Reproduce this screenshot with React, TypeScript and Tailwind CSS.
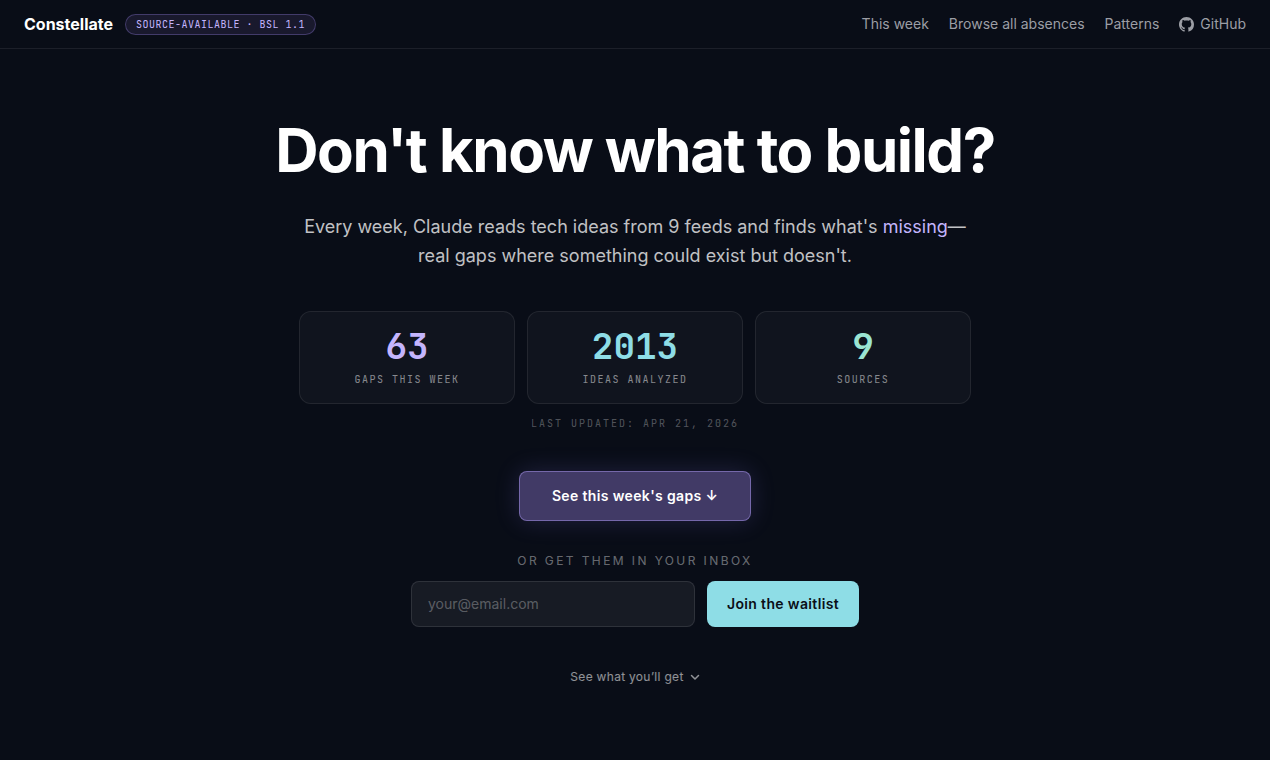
import React from "react";

const stats = [
  { value: "63", label: "Gaps this week", color: "text-[#c4b5fd]" },
  { value: "2013", label: "Ideas analyzed", color: "text-[#8edde6]" },
  { value: "9", label: "Sources", color: "text-[#9be5d3]" },
];

function GitHubIcon() {
  return (
    <svg viewBox="0 0 16 16" className="size-[15px]" fill="currentColor" aria-hidden="true">
      <path d="M8 0C3.58 0 0 3.58 0 8c0 3.54 2.29 6.53 5.47 7.59.4.07.55-.17.55-.38 0-.19-.01-.82-.01-1.49-2.01.37-2.53-.49-2.69-.94-.09-.23-.48-.94-.82-1.13-.28-.15-.68-.52-.01-.53.63-.01 1.08.58 1.23.82.72 1.21 1.87.87 2.33.66.07-.52.28-.87.51-1.07-1.78-.2-3.64-.89-3.64-3.95 0-.87.31-1.59.82-2.15-.08-.2-.36-1.02.08-2.12 0 0 .67-.21 2.2.82.64-.18 1.32-.27 2-.27s1.36.09 2 .27c1.53-1.04 2.2-.82 2.2-.82.44 1.1.16 1.92.08 2.12.51.56.82 1.27.82 2.15 0 3.07-1.87 3.75-3.65 3.95.29.25.54.73.54 1.48 0 1.07-.01 1.93-.01 2.2 0 .21.15.46.55.38A8.01 8.01 0 0 0 16 8c0-4.42-3.58-8-8-8z" />
    </svg>
  );
}

export default function App() {
  return (
    <div className="min-h-screen bg-[#090d17] font-['Inter',sans-serif] text-white">
      <header className="flex items-center justify-between border-b border-white/8 px-6 py-3">
        <div className="flex items-center gap-3">
          <a href="#" className="text-base leading-6 font-bold">Constellate</a>
          <span className="rounded-full border border-[#a78bfa]/30 bg-[#a78bfa]/10 px-2.5 py-0.5 font-['JetBrains_Mono','DejaVu_Sans_Mono',monospace] text-[10px] leading-[15px] tracking-wider text-[#c4b5fd] uppercase">
            Source-available · BSL 1.1
          </span>
        </div>
        <nav className="flex items-center gap-5 text-sm text-[#9c9ea5]">
          <a href="#week">This week</a>
          <a href="#absences">Browse all absences</a>
          <a href="#patterns">Patterns</a>
          <a href="#github" className="flex items-center gap-1.5">
            <GitHubIcon />
            GitHub
          </a>
        </nav>
      </header>
      <main className="flex flex-col items-center px-6 pt-[71px] pb-[70px] text-center">
        <h1 className="text-6xl leading-[60px] font-bold tracking-tight">Don't know what to build?</h1>
        <p className="mt-8 max-w-2xl text-lg leading-[29px] text-white/75">
          Every week, Claude reads tech ideas from 9 feeds and finds what's <span className="text-[#c4b5fd]">missing</span>—
          <br />
          real gaps where something could exist but doesn't.
        </p>
        <div className="mt-[41px] grid w-full max-w-2xl grid-cols-3 gap-3">
          {stats.map((s) => (
            <div key={s.label} className="rounded-xl border border-white/8 bg-white/3 p-4 font-['JetBrains_Mono','DejaVu_Sans_Mono',monospace]">
              <div className={`text-4xl leading-9 font-bold ${s.color}`}>{s.value}</div>
              <div className="mt-2 text-[10px] leading-[15px] tracking-[0.15em] text-white/50 uppercase">{s.label}</div>
            </div>
          ))}
        </div>
        <p className="mt-3 font-['JetBrains_Mono','DejaVu_Sans_Mono',monospace] text-[10px] leading-[15px] tracking-[0.2em] text-white/30 uppercase">
          Last updated: Apr 21, 2026
        </p>
        <a href="#week" className="mt-10 rounded-lg border border-[#8b7cc8]/70 bg-[#413a66] px-8 py-3 text-sm leading-6 font-semibold tracking-wide shadow-[0_0_24px_rgba(139,124,246,0.18)]">
          See this week's gaps ↓
        </a>
        <form className="mt-8 w-full max-w-md" onSubmit={(e) => e.preventDefault()}>
          <label htmlFor="email" className="block text-xs leading-4 tracking-[0.2em] text-white/40 uppercase">
            Or get them in your inbox
          </label>
          <div className="mt-3 flex gap-3">
            <input
              id="email"
              type="email"
              placeholder="your@email.com"
              className="min-w-0 flex-1 rounded-lg border border-white/10 bg-white/6 px-4 text-sm outline-none placeholder:text-white/30"
            />
            <button type="submit" className="rounded-lg bg-[#8edde6] px-5 py-[11px] text-sm leading-6 font-semibold tracking-wide text-[#0a0e17]">
              Join the waitlist
            </button>
          </div>
        </form>
        <a href="#preview" className="mt-10 flex items-center gap-1.5 text-xs leading-5 tracking-wide text-white/55">
          See what you’ll get
          <svg viewBox="0 0 10 10" className="size-2.5" fill="none" stroke="currentColor" strokeWidth="1.5" strokeLinecap="round" strokeLinejoin="round" aria-hidden="true">
            <path d="M1.5 3.5 5 7 8.5 3.5" />
          </svg>
        </a>
      </main>
    </div>
  );
}
